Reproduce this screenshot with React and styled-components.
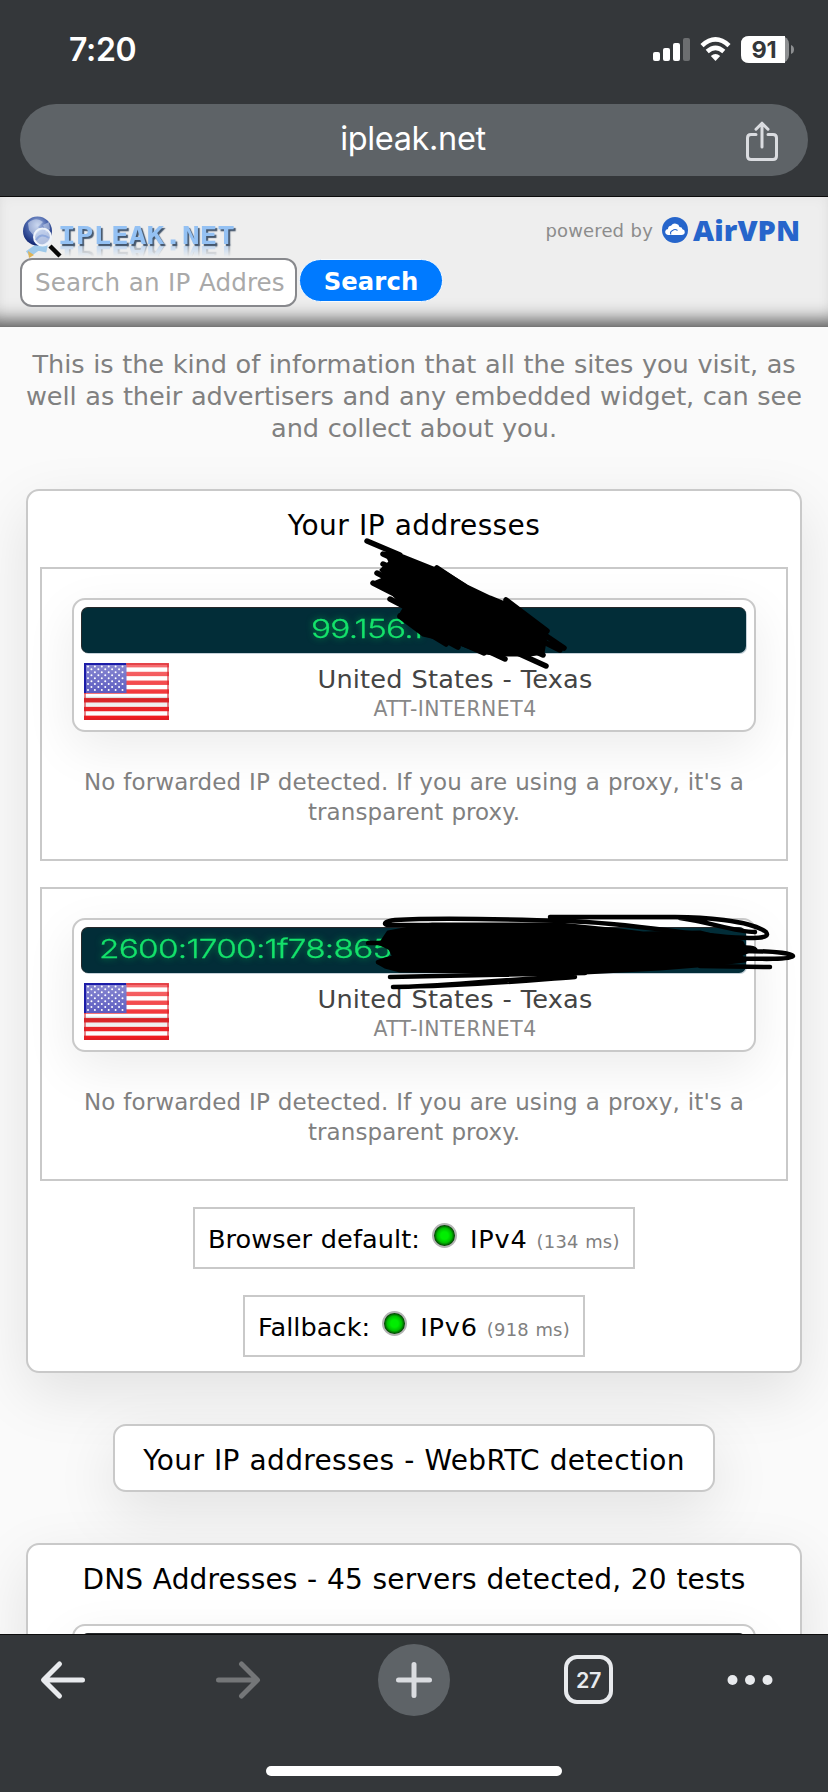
import React from "react";
import styled, { createGlobalStyle } from "styled-components";

const GlobalStyle = createGlobalStyle`
  * { box-sizing: border-box; }
  body { margin: 0; background: #fafafa; }
`;

const Screen = styled.div`
  position: relative;
  display: flex;
  flex-direction: column;
  width: 828px;
  height: 1792px;
  overflow: hidden;
  background: #fafafa;
  font-family: Verdana, "DejaVu Sans", sans-serif;
  letter-spacing: -0.003em;
  word-spacing: 0.035em;
  white-space: nowrap;
`;

/* browser chrome */
const BrowserTop = styled.div`
  flex: none;
  height: 197px;
  padding: 0 20px;
  background: #34373a;
  border-bottom: 1px solid #0c0c0c;
  font-family: Inter, sans-serif;
  letter-spacing: 0;
  word-spacing: 0;
`;

const StatusBar = styled.div`
  display: flex;
  align-items: center;
  height: 104px;
  padding: 0 14px 4px 49px;
  color: #fff;
`;

const Clock = styled.div`
  flex: 1;
  font-size: 32px;
  font-weight: 600;
  line-height: 40px;
  letter-spacing: -0.3px;
`;

const StatusIcons = styled.svg`
  display: block;
  width: 141px;
  height: 28px;
`;

const AddressBar = styled.div`
  display: flex;
  align-items: center;
  height: 72px;
  padding: 0 28px 0 60px;
  border-radius: 36px;
  background: #5e6367;
  color: #fff;
`;

const Address = styled.div`
  flex: 1;
  text-align: center;
  font-size: 32.5px;
  line-height: 40px;
  padding: 0 0 2px 2px;
  letter-spacing: -0.35px;
`;

const ShareIcon = styled.svg`
  width: 36px;
  height: 42px;
  margin-top: 3px;
`;

/* site header */
const SiteHeader = styled.header`
  flex: none;
  height: 130px;
  padding: 17px 20px 0;
  background: #eee;
  border-bottom: 1px solid #777;
  box-shadow: inset 0 -22px 18px -16px rgba(0, 0, 0, 0.62), inset 0 0 14px rgba(0, 0, 0, 0.04);
`;

const HeaderRow = styled.div`
  display: flex;
  justify-content: space-between;
  height: 44px;
`;

const Logo = styled.div`
  display: flex;
  align-items: flex-start;
`;

const GlobeIcon = styled.svg`
  width: 42px;
  height: 44px;
`;

const LogoText = styled.span`
  margin: 11px 0 0 -4px;
  height: 23px;
  font: 700 24px/23px "DejaVu Sans Mono", monospace;
  letter-spacing: 0;
  color: #94c1f3;
  text-shadow: 1.5px 1.5px 1px #44566c;
  transform: scaleX(1.225);
  transform-origin: 0 0;
  -webkit-box-reflect: below -6px linear-gradient(transparent 35%, rgba(0, 0, 0, 0.65));
`;

const Powered = styled.div`
  display: flex;
  align-items: center;
  height: 32px;
  padding-right: 8px;
  color: #8c8c8c;
  font-size: 18px;
  letter-spacing: 0.15px;
`;

const CloudIcon = styled.svg`
  width: 26px;
  height: 26px;
  margin: 0 5px 0 9px;
`;

const AirVpn = styled.span`
  width: 107px;
  font: 800 29px/32px "Open Sans", sans-serif;
  letter-spacing: 0.1px;
  color: #2665cb;
`;

const SearchRow = styled.div`
  display: flex;
  align-items: flex-start;
  gap: 2px;
`;

const SearchInput = styled.div`
  width: 277px;
  height: 49px;
  padding: 0 10px 0 13px;
  border: 2px solid #87888c;
  border-radius: 12px;
  background: #fff;
`;

const Placeholder = styled.div`
  font-size: 24.6px;
  line-height: 45px;
  letter-spacing: 0.12px;
  color: #a9a9a9;
`;

const SearchButton = styled.div`
  width: 144px;
  height: 43px;
  margin-top: 1px;
  border: 1px solid #f6fbff;
  border-radius: 22px;
  background: #007aff;
  color: #fff;
  font-size: 24.3px;
  font-weight: 700;
  letter-spacing: 0.1px;
  line-height: 44px;
  text-align: center;
`;

/* page content */
const Content = styled.main`
  flex: 1;
  min-height: 0;
  overflow: hidden;
  padding: 21px 26px 0;
`;

const Intro = styled.p`
  margin: 0 -20px 44px;
  font-size: 25.6px;
  line-height: 32px;
  height: 97px;
  text-align: center;
  color: #808080;
`;

const Panel = styled.section`
  display: flex;
  flex-direction: column;
  align-items: center;
  width: ${(p) => p.$width || 776}px;
  height: ${(p) => p.$height}px;
  margin: 0 auto 51px;
  padding: 0 12px;
  border: 2px solid #c9c9c9;
  border-radius: 13px;
  background: #fff;
  box-shadow: 0 20px 60px rgba(0, 0, 0, 0.1);
`;

const PanelTitle = styled.h2`
  flex: none;
  margin: 0;
  height: ${(p) => p.$height}px;
  font-size: 28px;
  font-weight: 400;
  letter-spacing: ${(p) => p.$spacing}px;
  line-height: ${(p) => p.$line}px;
  color: #000;
`;

const AddressBox = styled.div`
  flex: none;
  width: 748px;
  height: 294px;
  margin-bottom: 26px;
  padding: 29px 30px 0;
  border: 2px solid #c9c9c9;
`;

const IpCard = styled.div`
  flex: none;
  width: 684px;
  height: 134px;
  padding: 7px 8px 0 7px;
  border: 2px solid #c9c9c9;
  border-radius: 13px;
  background: #fff;
  box-shadow: 0 16px 50px rgba(0, 0, 0, 0.08);
`;

const IpBar = styled.div`
  height: 46px;
  padding-left: ${(p) => p.$indent}px;
  border-radius: 7px;
  border-top: 1px solid #26292b;
  border-left: 1px solid #26292b;
  background: #022d38;
  box-shadow: 1px 1px 0 #c5d0d8;
`;

const IpText = styled.span`
  display: inline-block;
  transform: scaleX(1.285);
  transform-origin: 0 50%;
  font: 300 26px/41px Inter, sans-serif;
  letter-spacing: -0.6px;
  color: #14e26b;
  -webkit-text-stroke: 0.3px #14e26b;
  text-shadow: 0 0 7px #009e48;
`;

const CardBody = styled.div`
  display: flex;
  padding: 10px 0 0 3px;
`;

const Flag = styled.svg`
  flex: none;
  width: 85px;
  height: 57px;
`;

const Location = styled.div`
  flex: 1;
  margin-top: 1px;
  padding-right: 5px;
  text-align: center;
  line-height: 30px;
  font-size: 25.6px;
  letter-spacing: 0.18px;
  color: #444;
`;

const Provider = styled.div`
  font-size: 20.4px;
  letter-spacing: 0.5px;
  color: #888;
`;

const ForwardNote = styled.p`
  margin: 35px -20px 0;
  text-align: center;
  font-size: 23px;
  line-height: 30px;
  letter-spacing: 0.09px;
  color: #808080;
`;

const ProtocolBox = styled.div`
  display: flex;
  align-items: center;
  flex: none;
  width: ${(p) => p.$width}px;
  height: 62px;
  margin-bottom: 26px;
  padding: 2px 0 0 13px;
  border: 2px solid #c9c9c9;
  font-size: 25.6px;
  letter-spacing: 0.05px;
  color: #000;
`;

const Led = styled.i`
  width: 25px;
  height: 25px;
  margin: -7px 13px 0 12px;
  border-radius: 50%;
  border: 2px solid #b4b4b4;
  background: radial-gradient(circle closest-side, #00ee00 0 35%, #00bd00 70%, #033803 100%);
`;

const Protocol = styled.span`
  letter-spacing: 0.8px;
`;

const Latency = styled.span`
  margin: 5px 0 0 9px;
  font-size: 17.9px;
  letter-spacing: 0.25px;
  color: #808080;
`;

/* toolbar */
const Toolbar = styled.nav`
  flex: none;
  height: 158px;
  border-top: 1px solid #0c0c0c;
  background: #34373a;
`;

const ToolbarRow = styled.div`
  display: flex;
  align-items: center;
  height: 72px;
  margin-top: 9px;
  padding-left: 38px;
`;

const ToolIcon = styled.svg`
  flex: none;
  width: ${(p) => p.$w}px;
  height: ${(p) => p.$h}px;
  margin-left: ${(p) => p.$gap || 0}px;
`;

const NewTab = styled.div`
  display: flex;
  align-items: center;
  justify-content: center;
  width: 72px;
  height: 72px;
  margin-left: 115px;
  border-radius: 50%;
  background: #5e6367;
`;

const TabCount = styled.div`
  width: 49px;
  height: 49px;
  margin: -1px 0 0 114px;
  border: 4px solid #e8eaed;
  border-radius: 13px;
  color: #e8eaed;
  font: 600 21.5px/42px Inter, sans-serif;
  letter-spacing: -0.3px;
  text-align: center;
`;

const HomeIndicator = styled.div`
  width: 296px;
  height: 10px;
  margin: 50px auto 0;
  border-radius: 5px;
  background: #fff;
`;

const Scribbles = styled.svg`
  position: absolute;
  left: 0;
  top: 0;
  width: 828px;
  height: 1792px;
  pointer-events: none;
`;

function UsFlag() {
  const stars = [];
  for (let r = 0; r < 9; r++) {
    for (let c = 0; c < (r % 2 ? 5 : 6); c++) {
      stars.push(<circle key={r + "-" + c} cx={4 + c * 6.9 + (r % 2 ? 3.45 : 0)} cy={3.4 + r * 2.95} r="1" fill="#fff" />);
    }
  }
  return (
    <Flag viewBox="0 0 85 57">
      <defs>
        <linearGradient id="gloss" x1="0" y1="0" x2="0" y2="1">
          <stop offset="0" stopColor="#fff" stopOpacity=".4" />
          <stop offset=".58" stopColor="#fff" stopOpacity=".12" />
          <stop offset=".6" stopColor="#555" stopOpacity=".2" />
          <stop offset="1" stopColor="#fff" stopOpacity="0" />
        </linearGradient>
      </defs>
      <rect width="85" height="57" fill="#fff" />
      {[0, 1, 2, 3, 4, 5, 6].map((i) => (
        <rect key={i} y={i * 8.77} width="85" height="4.38" fill="#f0161a" />
      ))}
      <rect width="42.5" height="30" fill="#3f3fb5" />
      {stars}
      <rect width="85" height="57" fill="url(#gloss)" />
      <path d="M1 30V1H42" fill="none" stroke="#1c1ca8" strokeWidth="2" />
      <path d="M42 1H84V56H1V30" fill="none" stroke="#d6222a" strokeWidth="1.5" strokeOpacity=".75" />
    </Flag>
  );
}

function AddressEntry({ ip, indent }) {
  return (
    <AddressBox>
      <IpCard>
        <IpBar $indent={indent}><IpText>{ip}</IpText></IpBar>
        <CardBody>
          <UsFlag />
          <Location>
            United States - Texas
            <Provider>ATT-INTERNET4</Provider>
          </Location>
        </CardBody>
      </IpCard>
      <ForwardNote>
        No forwarded IP detected. If you are using a proxy, it's a<br />
        transparent proxy.
      </ForwardNote>
    </AddressBox>
  );
}

export default function App() {
  return (
    <Screen>
      <GlobalStyle />
      <BrowserTop>
        <StatusBar>
          <Clock>7:20</Clock>
          <StatusIcons viewBox="653 36 141 28">
            <g fill="#fff">
              <rect x="653" y="52" width="7" height="9" rx="2" />
              <rect x="663" y="48" width="7" height="13" rx="2" />
              <rect x="673" y="43" width="7" height="18" rx="2" />
              <rect x="683" y="38" width="7" height="23" rx="2" fillOpacity=".28" />
              <path d="M710.8 56 L715.5 61 L720.2 56 Q715.5 52 710.8 56Z" />
            </g>
            <path d="M702 45.6Q715.5 33.2 729 45.6M707.2 51.4Q715.5 44.2 723.8 51.4" fill="none" stroke="#fff" strokeWidth="4.6" />
            <rect x="741" y="36" width="48" height="27" rx="8" fill="#8d8f91" />
            <path d="M749 36H785V63H749Q741 63 741 55V44Q741 36 749 36Z" fill="#fff" />
            <path d="M791 45Q794 46 794 49.5T791 54Z" fill="#8d8f91" />
            <text x="764" y="58" textAnchor="middle" fontFamily="Inter" fontWeight="700" fontSize="23.5" letterSpacing="-.3" fill="#34373a">91</text>
          </StatusIcons>
        </StatusBar>
        <AddressBar>
          <Address>ipleak.net</Address>
          <ShareIcon viewBox="0 0 36 42" fill="none" stroke="#dadce0" strokeWidth="3" strokeLinecap="round" strokeLinejoin="round">
            <path d="M12 13.5H7Q3.5 13.5 3.5 17V35Q3.5 38.5 7 38.5H29Q32.5 38.5 32.5 35V17Q32.5 13.5 29 13.5H24M18 26V2.5M12 8.2L18 2.2L24 8.2" />
          </ShareIcon>
        </AddressBar>
      </BrowserTop>

      <SiteHeader>
        <HeaderRow>
          <Logo>
            <GlobeIcon viewBox="20 214 42 44">
              <defs>
                <radialGradient id="globe" cx=".5" cy=".3" r=".7">
                  <stop offset="0" stopColor="#b0c2e6" />
                  <stop offset=".5" stopColor="#4a65ab" />
                  <stop offset="1" stopColor="#0f2470" />
                </radialGradient>
              </defs>
              <path d="M28 254L38 247L47 249" fill="none" stroke="#9ec9ea" strokeWidth="7" />
              <path d="M28 251L34 255L29 258Z" fill="#dfb455" />
              <circle cx="37.5" cy="231" r="14.5" fill="url(#globe)" />
              <path d="M28 223Q36 216 43 222L38 227L41 230L34 236L29 230Z" fill="#e6edf9" fillOpacity=".5" />
              <path d="M43 225L49 222L50 229L46 233Z" fill="#dce5f6" fillOpacity=".5" />
              <circle cx="42.5" cy="237" r="8.5" fill="#d7e4f7" fillOpacity=".8" stroke="#eef3fa" strokeWidth="2" />
              <path d="M36 240Q41 232 49 238" stroke="#8fa9dc" strokeWidth="2" fill="none" />
              <path d="M50 246L60 256" stroke="#080808" strokeWidth="4.5" />
            </GlobeIcon>
            <LogoText>IPLEAK.NET</LogoText>
          </Logo>
          <Powered>
            powered by
            <CloudIcon viewBox="0 0 26 26">
              <circle cx="13" cy="13" r="13" fill="#2665cb" />
              <path d="M6 18Q3 17 3.2 14.5Q3.5 12.3 6 12Q6 9 9 8.8Q11 6 14 6.7Q17 7.3 17.5 10Q20 10 20.5 12.3Q23 13 22.8 15.3Q22.5 18 19.5 18Z" fill="#fff" />
              <path d="M9 17.5Q7.5 15 10.5 13.6Q13 11.5 15.5 13.5" fill="none" stroke="#2665cb" strokeWidth="1.1" />
            </CloudIcon>
            <AirVpn>AirVPN</AirVpn>
          </Powered>
        </HeaderRow>
        <SearchRow>
          <SearchInput><Placeholder>Search an IP Addres</Placeholder></SearchInput>
          <SearchButton>Search</SearchButton>
        </SearchRow>
      </SiteHeader>

      <Content>
        <Intro>
          This is the kind of information that all the sites you visit, as<br />
          well as their advertisers and any embedded widget, can see<br />
          and collect about you.
        </Intro>
        <Panel $height={884}>
          <PanelTitle $height={76} $line={69} $spacing={0.4}>Your IP addresses</PanelTitle>
          <AddressEntry ip="99.156.1" indent={229} />
          <AddressEntry ip="2600:1700:1f78:865" indent={17} />
          <ProtocolBox $width={442}>
            Browser default:<Led /><Protocol>IPv4</Protocol><Latency>(134 ms)</Latency>
          </ProtocolBox>
          <ProtocolBox $width={342}>
            Fallback:<Led /><Protocol>IPv6</Protocol><Latency>(918 ms)</Latency>
          </ProtocolBox>
        </Panel>
        <Panel $width={602} $height={68}>
          <PanelTitle $height={64} $line={69} $spacing={0.33}>Your IP addresses - WebRTC detection</PanelTitle>
        </Panel>
        <Panel $height={400}>
          <PanelTitle $height={79} $line={69} $spacing={0.15}>DNS Addresses - 45 servers detected, 20 tests</PanelTitle>
          <IpCard><IpBar $indent={0} /></IpCard>
        </Panel>
      </Content>

      <Toolbar>
        <ToolbarRow>
          <ToolIcon $w={50} $h={44} viewBox="0 0 50 44" fill="none" stroke="#e8eaed" strokeWidth="5" strokeLinecap="round" strokeLinejoin="round">
            <path d="M21.5 6L5.5 22L21.5 38M6 22H44.5" />
          </ToolIcon>
          <ToolIcon $gap={125} $w={50} $h={44} viewBox="0 0 50 44" fill="none" stroke="#747678" strokeWidth="5" strokeLinecap="round" strokeLinejoin="round">
            <path d="M28.5 6L44.5 22L28.5 38M44 22H5.5" />
          </ToolIcon>
          <NewTab>
            <ToolIcon $w={40} $h={40} viewBox="0 0 40 40" stroke="#dadce0" strokeWidth="5" strokeLinecap="round">
              <path d="M20 4.5V35.5M4.5 20H35.5" />
            </ToolIcon>
          </NewTab>
          <TabCount>27</TabCount>
          <ToolIcon $gap={113} $w={48} $h={12} viewBox="0 0 48 12" fill="#e8eaed">
            <circle cx="6.5" cy="6" r="5" />
            <circle cx="24" cy="6" r="5" />
            <circle cx="41.5" cy="6" r="5" />
          </ToolIcon>
        </ToolbarRow>
        <HomeIndicator />
      </Toolbar>

      <Scribbles viewBox="0 0 828 1792" stroke="#000" strokeWidth="5.5" strokeLinecap="round" strokeLinejoin="round" fill="none">
        <path fill="#000" strokeWidth="3" d="M386 553L403 556L433 568L438 568L467 586L490 597L512 606L530 618L547 630L543 653L530 655L505 655L485 653L457 643L423 635L399 617L405 607L389 590L376 582L388 577L381 570L390 562Z" />
        <path d="M367 541L400 555M383 554L440 580M383 564L420 580M377 573L430 600M373 583L430 612M390 599L440 625M400 616L446 644M430 632L458 647M450 638L484 653M475 645L505 659M500 645L546 666M510 640L543 655M530 625L564 648M506 600L547 631M437 568L470 590M520 630L560 650" />
        <path fill="#000" strokeWidth="3" d="M388 932L415 927L432 924L560 924L620 930L643 933L700 932L720 937L742 942L745 948L752 950L740 955L745 961L710 965L660 969L585 973L400 971L385 967L378 963L394 957L390 949L380 944Z" />
        <path strokeWidth="4.5" d="M430 925L387 925C383 924 385 921 395 920C450 917 520 920 565 921C640 923 700 938 749 938C766 938 769 936 766 932C750 920 700 917 675 917L550 917M680 918C710 922 735 932 755 932M368 943L420 943M378 962Q395 956 410 957M730 948C750 947 755 947 756 951M740 951C780 951 793 954 793 956C791 960 760 959 710 958M700 966L770 967M390 977L585 973M393 987C450 987 490 979 575 977C520 981 470 986 393 987" />
      </Scribbles>
    </Screen>
  );
}
